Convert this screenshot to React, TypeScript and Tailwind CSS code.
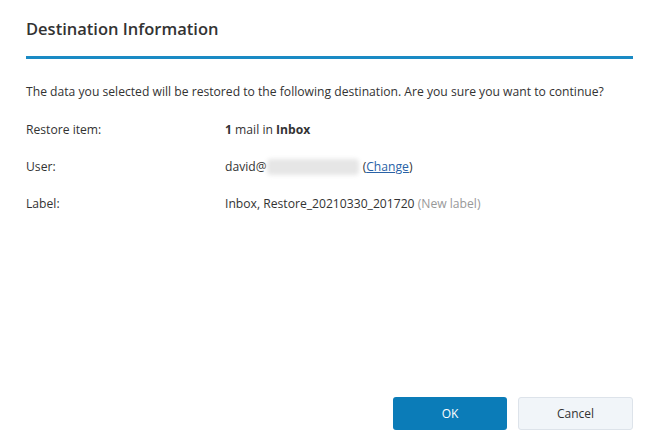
export default function App() {
  return (
    <div className="w-[659px] h-[447px] bg-white text-[#333] font-['Open_Sans',sans-serif] flex flex-col px-[26px]">
      <div className="pt-[18px] pb-[16px] text-[16.5px] font-semibold text-[#333] leading-[22px]">
        Destination Information
      </div>
      <div className="h-[3px] bg-[#1a8ac4]" />
      <p className="mt-[24px] text-[12.15px] leading-[18px] text-[#333]">
        The data you selected will be restored to the following destination. Are you sure you want to continue?
      </p>
      <div className="mt-[20px] flex flex-col gap-[19px] text-[12.15px] leading-[18px]">
        <div className="flex">
          <div className="w-[199px]">Restore item:</div>
          <div>
            <b className="font-bold">1</b> mail in <b className="font-bold">Inbox</b>
          </div>
        </div>
        <div className="flex">
          <div className="w-[199px]">User:</div>
          <div className="flex items-center">
            <span>david@</span>
            <span className="w-[92px] h-[16px] bg-[#e6e6e6] blur-[2px] rounded-sm" />
            <span className="ml-[4px]">
              (<span className="text-[#2a62a6] underline">Change</span>)
            </span>
          </div>
        </div>
        <div className="flex">
          <div className="w-[199px]">Label:</div>
          <div>
            Inbox, Restore_20210330_201720 <span className="text-[#999]">(New label)</span>
          </div>
        </div>
      </div>
      <div className="mt-auto mb-[17px] flex justify-end gap-[11px]">
        <button className="w-[114px] h-[33px] rounded-[3px] bg-[#0b7cb8] text-white text-[12px]">OK</button>
        <button className="w-[115px] h-[33px] rounded-[3px] bg-[#f1f5f9] border border-[#dde3ea] text-[#333] text-[12px]">
          Cancel
        </button>
      </div>
    </div>
  )
}
